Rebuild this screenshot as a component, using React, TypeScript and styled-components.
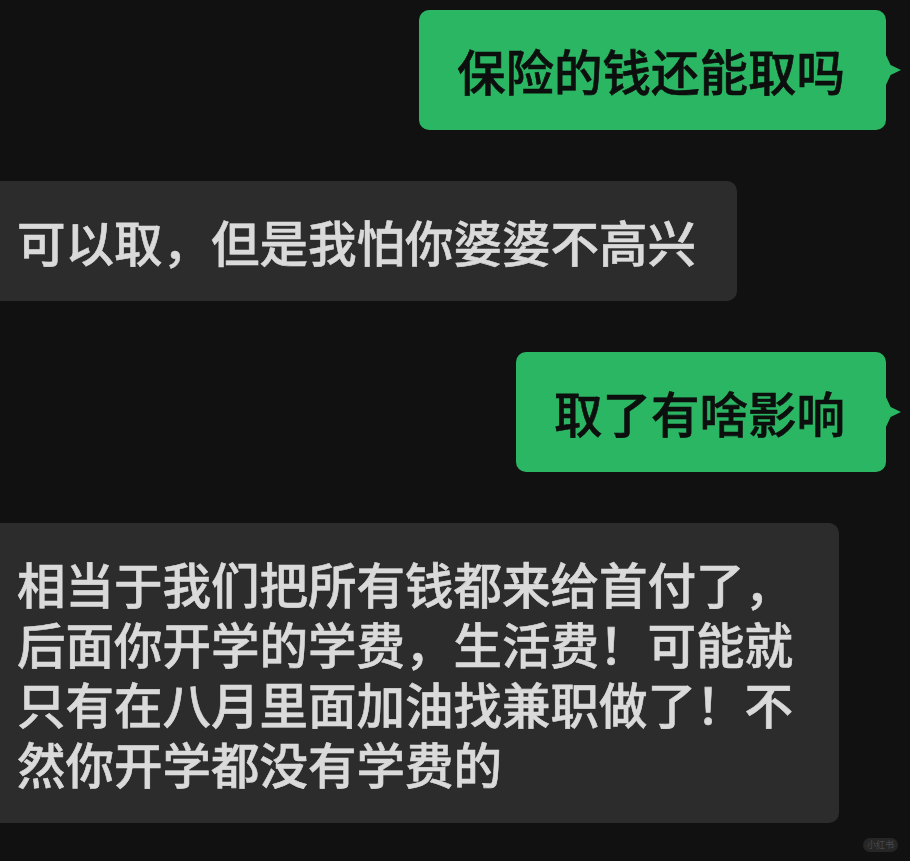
import React from 'react';
import styled, {createGlobalStyle, css} from "styled-components";

const GlobalStyle = createGlobalStyle`
    html, body {
        margin: 0;
        padding: 0;
        background: #111111;
        overflow: hidden;
    }
`

type Msg = {
    from: 'me' | 'them'
    text: string
}

const messages: Msg[] = [
    {from: 'me', text: '保险的钱还能取吗'},
    {from: 'them', text: '可以取，但是我怕你婆婆不高兴'},
    {from: 'me', text: '取了有啥影响'},
    {from: 'them', text: '相当于我们把所有钱都来给首付了，后面你开学的学费，生活费！可能就只有在八月里面加油找兼职做了！不然你开学都没有学费的'},
]

export default function App() {
    return (
        <Page>
            <GlobalStyle/>
            <ChatList>
                {messages.map((m, i) => (
                    <Row key={i} side={m.from}>
                        <Bubble side={m.from}>{m.text}</Bubble>
                    </Row>
                ))}
            </ChatList>
            <Watermark>小红书</Watermark>
        </Page>
    );
}

const Page = styled.div`
    position: relative;
    width: 910px;
    height: 861px;
    background: #111111;
    overflow: hidden;
    font-family: "Noto Sans CJK SC", "Noto Sans", sans-serif;
`

const ChatList = styled.div`
    display: flex;
    flex-direction: column;
    gap: 51px;
    padding: 10px 24px 0 0;
`

type SideProps = {
    side: 'me' | 'them'
}

const Row = styled.div<SideProps>`
    display: flex;
    justify-content: ${props => props.side === 'me' ? 'flex-end' : 'flex-start'};
`

const Bubble = styled.div<SideProps>`
    position: relative;
    box-sizing: border-box;
    max-width: 860px;
    padding: 30px 41px 30px 38px;
    border-radius: 10px;
    font-size: 48.5px;
    line-height: 60px;
    font-weight: 500;
    -webkit-text-stroke: 0.6px currentColor;
    word-break: break-all;

    ${props => props.side === 'me' ? css`
        background: #2bb663;
        color: #0c0f0d;

        &::after {
            content: '';
            position: absolute;
            right: -15px;
            top: 50%;
            margin-top: -17px;
            width: 16px;
            height: 34px;
            background: #2bb663;
            clip-path: polygon(0 0, 35% 35%, 100% 50%, 35% 65%, 0 100%);
        }
    ` : css`
        margin-left: -21px;
        background: #2c2c2c;
        color: #dadada;
    `}
`

const Watermark = styled.div`
    position: absolute;
    right: 12px;
    bottom: 9px;
    padding: 1px 4px;
    border-radius: 7px;
    background: #262626;
    color: #4a4a4a;
    font-size: 9px;
    line-height: 12px;
`
